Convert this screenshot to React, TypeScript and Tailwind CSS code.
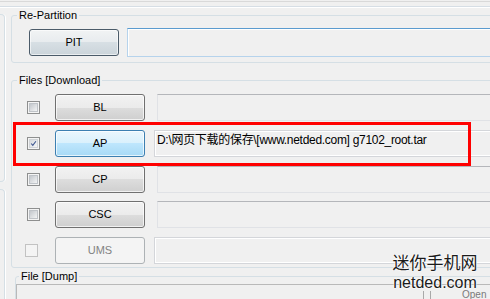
import React from "react";

const btnBase =
  "h-[27px] w-[90px] shrink-0 rounded-[3px] border flex items-center justify-center text-[11px]";

const btnNormal =
  "border-[#707070] text-black bg-[linear-gradient(to_bottom,#f2f2f2_0%,#ebebeb_50%,#dddddd_50%,#cfcfcf_100%)] shadow-[inset_0_0_0_1px_rgba(255,255,255,0.7)]";
const btnHot =
  "border-[#3c7fb1] text-black bg-[linear-gradient(to_bottom,#eaf6fd_0%,#d9f0fc_50%,#bee6fd_50%,#a7d9f5_100%)] shadow-[inset_0_0_0_1px_rgba(255,255,255,0.7)]";
const btnPit =
  "border-[#4b5b69] text-black bg-[linear-gradient(to_bottom,#f1f3f4_0%,#e7ebee_50%,#d7dfe4_50%,#cbd4da_100%)] shadow-[inset_0_0_0_1px_rgba(255,255,255,0.6)]";
const btnOff = "border-[#adb2b5] text-[#838383] bg-[#f4f4f4]";

const Check = ({ checked, disabled }: { checked?: boolean; disabled?: boolean }) => {
  if (disabled) {
    return <div className="w-[13px] h-[13px] shrink-0 border border-[#c2c2c2] bg-[#f4f4f4]" />;
  }
  return (
    <div className="w-[13px] h-[13px] shrink-0 border border-[#8e8f8f] bg-[#f4f4f4] p-px">
      <div
        className={
          checked
            ? "w-full h-full border border-[#d0d3d7] bg-[linear-gradient(135deg,#d6d9dd,#f4f5f6)]"
            : "w-full h-full border border-[#bfc3c8] bg-[linear-gradient(135deg,#c3c7cc,#f3f4f5)]"
        }
      >
        {checked && (
          <svg viewBox="0 0 9 9" className="w-full h-full">
            <path d="M1.5 4.5 L3.6 6.8 L7.6 1.6" stroke="#3d5590" strokeWidth="1.4" fill="none" />
          </svg>
        )}
      </div>
    </div>
  );
};

type RowProps = {
  label: string;
  btn: string;
  checked?: boolean;
  disabled?: boolean;
  field: string;
  text?: string;
  className?: string;
  checkOffset?: string;
};

const Row = ({ label, btn, checked, disabled, field, text, className, checkOffset }: RowProps) => (
  <div className={"flex items-center h-[27px] " + (className ?? "")}>
    <div className={checkOffset ?? ""}>
      <Check checked={checked} disabled={disabled} />
    </div>
    <div className={btnBase + " " + btn + (checkOffset ? " ml-[17px]" : " ml-[15px]")}>{label}</div>
    <div className={field}>
      {text && (
        <div className="pl-[2px] pt-[2px] text-[12px] leading-[14px] tracking-[-0.3px] text-black whitespace-pre font-['Liberation_Sans','Noto_Sans_CJK_SC',sans-serif]">
          {text}
        </div>
      )}
    </div>
  </div>
);

const fieldPlain =
  "ml-[12px] h-[27px] flex-1 border border-[#e0e2e6] border-t-[#b4b6ba] bg-[#f0f0f0]";
const fieldWide =
  "ml-[9px] h-[27px] flex-1 border border-[#d4d6da] bg-[#f0f0f0] shadow-[inset_1px_1px_0_#fff,inset_-1px_-1px_0_#fff]";

const apPath = "D:\\网页下载的保存\\[www.netded.com] g7102_root.tar";

export default function App() {
  return (
    <div className="relative w-[490px] h-[299px] overflow-hidden bg-[#f0f0f0] flex flex-col font-['Liberation_Sans',Arial,sans-serif] text-[11px] text-black">
      {/* top edge lines */}
      <div className="h-[8px] shrink-0">
        <div className="mt-px h-px bg-[#d9d9d9]" />
        <div className="mt-[4px] h-px bg-[#d6dee5]" />
        <div className="h-px bg-white" />
      </div>

      <div className="flex flex-1 min-h-0">
        {/* cut-off left column */}
        <div className="w-[5px] shrink-0 flex flex-col">
          <div className="mt-[6px] h-[168px] border-t border-r border-b border-[#d5dfe5] rounded-r-[4px] shadow-[1px_0_0_#fff]" />
          <div className="mt-[7px] flex-1 border-t border-r border-[#d5dfe5] rounded-tr-[4px] shadow-[1px_0_0_#fff]" />
        </div>

        <div className="ml-[6px] w-[520px] shrink-0 flex flex-col">
          <fieldset className="border border-[#d5dfe5] rounded-[3px]">
            <legend className="ml-[5px] px-[2px] leading-[14px]">Re-Partition</legend>
            <div className="flex items-center pl-[17px] pt-[6px] pb-[5px]">
              <div className={btnBase + " " + btnPit}>PIT</div>
              <div className="ml-[8px] h-[29px] flex-1 border border-[#b6d3ec] border-t-[#5b9bcf] bg-[#f0f0f0] shadow-[inset_1px_1px_0_#fff]" />
            </div>
          </fieldset>

          <fieldset className="mt-[10px] border border-[#d5dfe5] rounded-[3px]">
            <legend className="ml-[5px] px-[2px] leading-[14px]">Files [Download]</legend>
            <div className="flex flex-col pl-[15px] pt-[7px] pb-[3px]">
              <Row label="BL" btn={btnNormal} field={fieldPlain} />
              <Row label="AP" btn={btnHot} checked field={fieldWide} className="mt-[9px]" text={apPath} />
              <Row label="CP" btn={btnNormal} field={fieldPlain} className="mt-[9px]" />
              <Row label="CSC" btn={btnNormal} field={fieldPlain} className="mt-[8px]" />
              <Row
                label="UMS"
                btn={btnOff}
                disabled
                field={fieldWide}
                className="mt-[9px]"
                checkOffset="-ml-[2px]"
              />
            </div>
          </fieldset>

          <fieldset className="mt-px ml-[4px] flex-1 border border-[#d5dfe5] rounded-[3px]">
            <legend className="ml-[3px] px-[2px] leading-[14px]">File [Dump]</legend>
            <div className="mt-px h-[30px] border-l border-t border-[#b9b9b9] flex">
              <div className="ml-[406px] mt-[6px] w-[8px] h-[20px] border-l border-r border-[#a9a9a9]" />
              <div className="ml-[31px] mt-[5px] text-[10px] text-[#7a7a7a] leading-[10px]">Open</div>
            </div>
          </fieldset>
        </div>
      </div>

      {/* red highlight annotation */}
      <div className="absolute left-[13px] top-[122px] w-[458px] h-[44px] border-[3px] border-[#ff0000]" />

      {/* watermark */}
      <div className="absolute left-[388px] top-[252px] w-[94px] flex flex-col items-center text-[#1b1b1b] [text-shadow:0_0_2px_#fff,0_0_2px_#fff,0_0_1px_#fff]">
        <div className="h-[20px] text-[17px] leading-[20px] font-['Noto_Sans_CJK_SC',sans-serif]">迷你手机网</div>
        <div className="mt-[2px] h-[18px] text-[16px] leading-[18px] font-['Liberation_Sans',Arial,sans-serif]">netded.com</div>
      </div>
    </div>
  );
}
